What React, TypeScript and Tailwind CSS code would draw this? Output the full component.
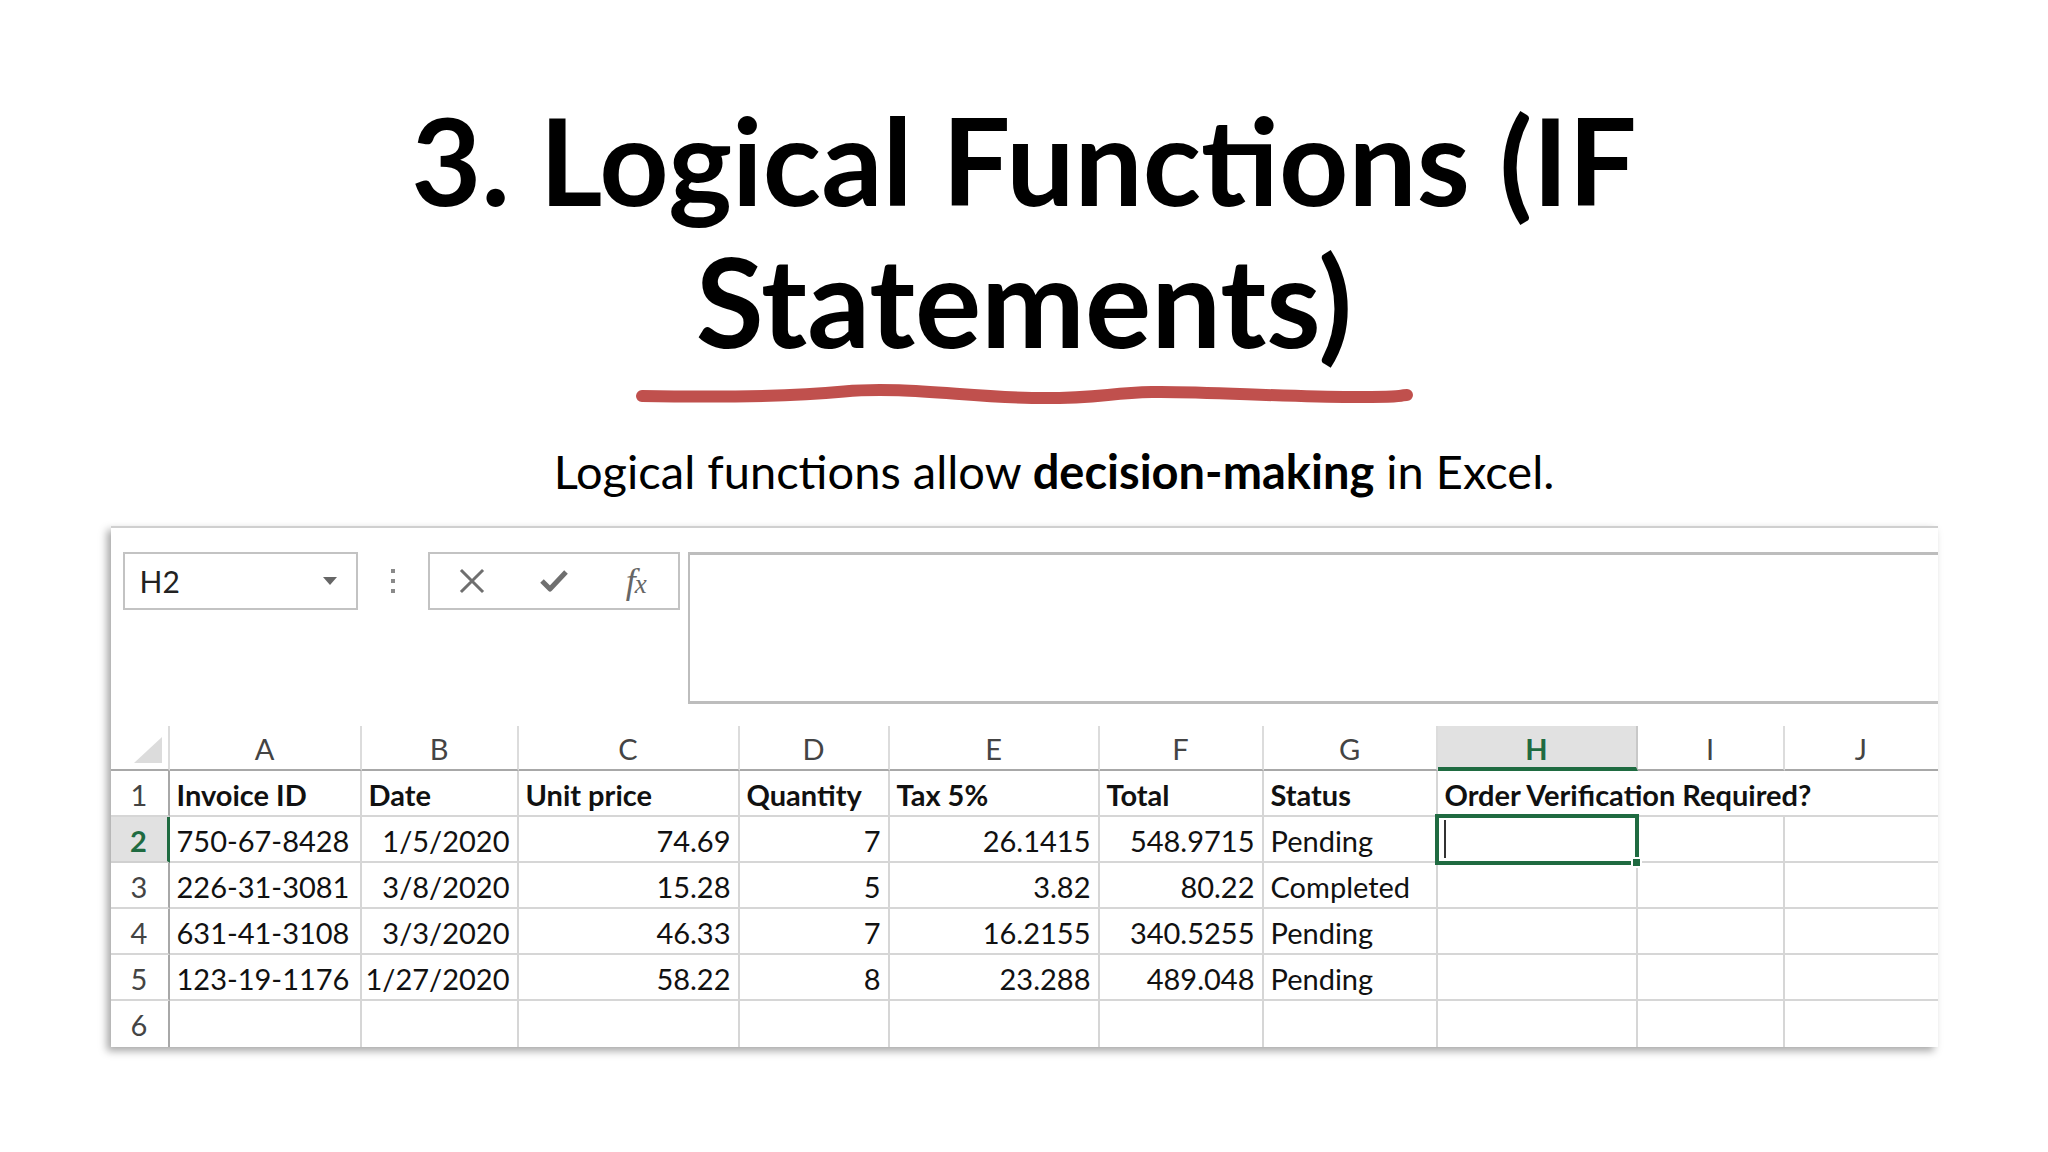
import React from "react";

const FONT = "font-[Lato,sans-serif]";

type Cell = { t: string; a?: "l" | "r"; b?: boolean };

const rows: Cell[][] = [
  [
    { t: "Invoice ID", b: true },
    { t: "Date", b: true },
    { t: "Unit price", b: true },
    { t: "Quantity", b: true },
    { t: "Tax 5%", b: true },
    { t: "Total", b: true },
    { t: "Status", b: true },
    { t: "Order Verification Required?", b: true },
    { t: "" },
    { t: "" },
  ],
  [
    { t: "750-67-8428" },
    { t: "1/5/2020", a: "r" },
    { t: "74.69", a: "r" },
    { t: "7", a: "r" },
    { t: "26.1415", a: "r" },
    { t: "548.9715", a: "r" },
    { t: "Pending" },
    { t: "" },
    { t: "" },
    { t: "" },
  ],
  [
    { t: "226-31-3081" },
    { t: "3/8/2020", a: "r" },
    { t: "15.28", a: "r" },
    { t: "5", a: "r" },
    { t: "3.82", a: "r" },
    { t: "80.22", a: "r" },
    { t: "Completed" },
    { t: "" },
    { t: "" },
    { t: "" },
  ],
  [
    { t: "631-41-3108" },
    { t: "3/3/2020", a: "r" },
    { t: "46.33", a: "r" },
    { t: "7", a: "r" },
    { t: "16.2155", a: "r" },
    { t: "340.5255", a: "r" },
    { t: "Pending" },
    { t: "" },
    { t: "" },
    { t: "" },
  ],
  [
    { t: "123-19-1176" },
    { t: "1/27/2020", a: "r" },
    { t: "58.22", a: "r" },
    { t: "8", a: "r" },
    { t: "23.288", a: "r" },
    { t: "489.048", a: "r" },
    { t: "Pending" },
    { t: "" },
    { t: "" },
    { t: "" },
  ],
  [
    { t: "" },
    { t: "" },
    { t: "" },
    { t: "" },
    { t: "" },
    { t: "" },
    { t: "" },
    { t: "" },
    { t: "" },
    { t: "" },
  ],
];

const letters = ["A", "B", "C", "D", "E", "F", "G", "H", "I", "J"];

function Underline() {
  return (
    <svg width="780" height="24" viewBox="0 0 780 24" className="block">
      <path
        d="M7 14 C 60 15, 150 15, 209 9.5 S 330 15, 397 16 S 470 11, 517 10 S 650 15, 716 15 S 760 13, 772 13"
        fill="none"
        stroke="#c0504d"
        strokeWidth="12"
        strokeLinecap="round"
      />
    </svg>
  );
}

export default function App() {
  return (
    <div className={`w-[2048px] h-[1152px] bg-white overflow-hidden flex flex-col items-center text-black ${FONT}`}>
      <h1 className="mt-[88px] h-[280px] text-center font-bold text-[124px] leading-[140px] text-black">
        <span className="text-[121px]">3. Logical Functions (IF</span>
        <br />
        Statements)
      </h1>
      <div className="mt-[14px] ml-[2px]">
        <Underline />
      </div>
      <p className="mt-[35px] ml-[60px] text-[47px] leading-[60px] text-black">
        Logical functions allow <span className="font-bold">decision-making</span> in Excel.
      </p>

      <div className="mt-[25px] w-[1827px] bg-white border-t-2 border-[#cfcfcf] shadow-[-4px_4px_8px_rgba(0,0,0,0.35)]">
        {/* formula bar area */}
        <div className="flex items-start pt-[24px] pl-[12px]">
          <div className="w-[235px] h-[58px] border-2 border-[#c3c3c3] flex items-center justify-between pl-[15px] pr-[19px]">
            <span className="text-[30px] leading-[54px] text-[#222]">H2</span>
            <svg width="14" height="9" viewBox="0 0 14 9">
              <path d="M0 0 L14 0 L7 8 Z" fill="#666" />
            </svg>
          </div>
          <div className="w-[70px] h-[58px] flex flex-col items-center justify-center gap-[6px]">
            <div className="w-[4px] h-[4px] bg-[#8a8a8a]" />
            <div className="w-[4px] h-[4px] bg-[#8a8a8a]" />
            <div className="w-[4px] h-[4px] bg-[#8a8a8a]" />
          </div>
          <div className="w-[252px] h-[58px] border-2 border-[#c3c3c3] flex items-center pl-[1px]">
            <div className="w-[83px] flex justify-center">
              <svg width="26" height="26" viewBox="0 0 26 26">
                <path d="M3 3 L23 23 M23 3 L3 23" stroke="#6f6f6f" strokeWidth="3" strokeLinecap="square" />
              </svg>
            </div>
            <div className="w-[83px] flex justify-center">
              <svg width="30" height="26" viewBox="0 0 30 26">
                <path d="M3 13 L11 21 L27 4" fill="none" stroke="#6f6f6f" strokeWidth="5" strokeLinejoin="round" />
              </svg>
            </div>
            <div className="w-[83px] flex justify-center items-baseline font-['Liberation_Serif',serif] italic text-[#666]">
              <span className="text-[36px] leading-none">f</span>
              <span className="text-[27px] leading-none -ml-[1px]">x</span>
            </div>
          </div>
          <div className="ml-[8px] flex-1 h-[152px] border-l-2 border-t-[3px] border-b-[3px] border-[#bdbdbd]" />
        </div>

        {/* grid */}
        <div className="mt-[22px] grid grid-cols-[59px_192px_157px_221px_150px_210px_164px_174px_200px_147px_153px] text-[29px]">
          {/* header row */}
          <div className="relative h-[45px] border-b-2 border-b-[#a8a8a8] border-r-2 border-r-[#dcdcdc]">
            <svg width="28" height="26" viewBox="0 0 28 26" className="absolute right-[6px] bottom-[6px]">
              <path d="M28 0 L28 26 L0 26 Z" fill="#dcdcdc" />
            </svg>
          </div>
          {letters.map((l, i) =>
            l === "H" ? (
              <div
                key={l}
                className="h-[45px] bg-[#e1e1e1] border-b-[4px] border-b-[#1f6b41] border-r-2 border-r-[#c8c8c8] text-center font-bold text-[#1f6b41] leading-[45px]"
              >
                {l}
              </div>
            ) : (
              <div
                key={l}
                className={`h-[45px] border-b-2 border-b-[#a8a8a8] ${i < 9 ? "border-r-2 border-r-[#dcdcdc]" : ""} text-center text-[#444] leading-[45px]`}
              >
                {l}
              </div>
            )
          )}

          {rows.map((r, ri) => (
            <React.Fragment key={ri}>
              {ri === 1 ? (
                <div className="h-[46px] bg-[#e1e1e1] border-b-2 border-b-[#d0d0d0] border-r-[3px] border-r-[#1f6b41] text-center font-bold text-[#1f6b41] leading-[47px]">
                  {ri + 1}
                </div>
              ) : (
                <div
                  className={`h-[46px] ${ri < 5 ? "border-b-2 border-b-[#d6d6d6]" : ""} border-r-2 border-r-[#a8a8a8] text-center text-[#444] leading-[47px]`}
                >
                  {ri + 1}
                </div>
              )}
              {r.map((c, ci) => {
                const hideRight = (ri === 0 && (ci === 7 || ci === 8)) || ci === 9;
                const visible = (ri === 0 && ci === 7) || (ri === 1 && ci === 7);
                return (
                  <div
                    key={ci}
                    className={`relative h-[46px] ${ri < 5 ? "border-b-2 border-b-[#d6d6d6]" : ""} ${hideRight ? "" : "border-r-2 border-r-[#d6d6d6]"} whitespace-nowrap leading-[47px] text-[#111] ${c.a === "r" ? "text-right pr-[7px]" : "text-left pl-[7px]"} ${c.b ? "font-bold" : ""} ${visible ? "overflow-visible z-10" : "overflow-hidden"}`}
                  >
                    {c.t}
                    {ri === 1 && ci === 7 && (
                      <div className="absolute -left-[3px] -top-[3px] w-[204px] h-[51px] border-[4px] border-[#1f6b41]">
                        <div className="absolute left-[5px] top-[2px] w-[2px] h-[38px] bg-[#333]" />
                        <div className="absolute -right-[7px] -bottom-[7px] w-[11px] h-[11px] bg-[#1f6b41] border-2 border-white" />
                      </div>
                    )}
                  </div>
                );
              })}
            </React.Fragment>
          ))}
        </div>
      </div>
    </div>
  );
}
